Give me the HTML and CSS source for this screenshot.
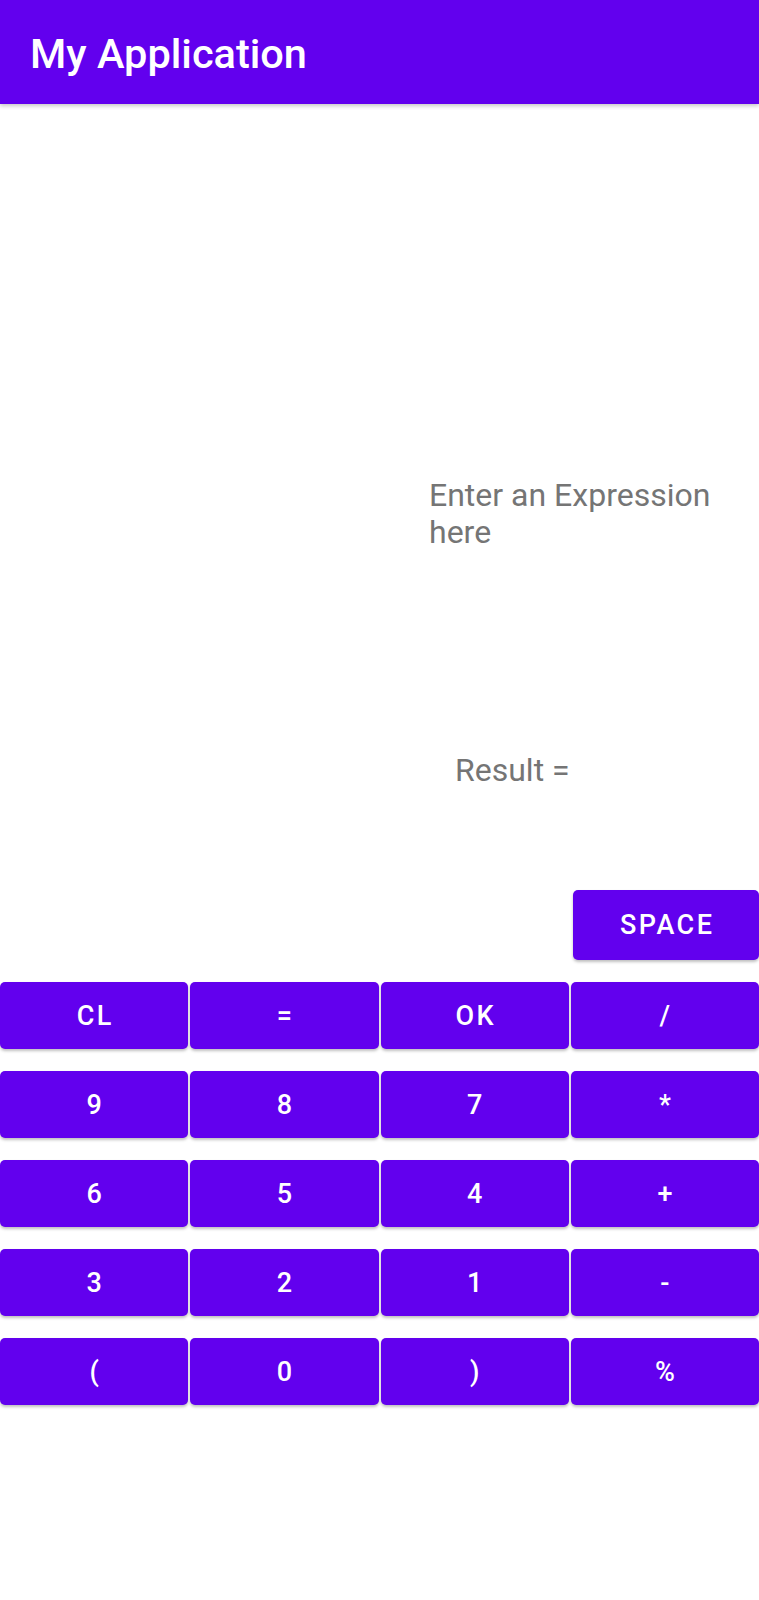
FILE: index.html
```html
<!DOCTYPE html>
<html>
<head>
<meta charset="utf-8">
<link rel="stylesheet" href="styles.css">
</head>
<body>
<header class="appbar">My Application</header>
<main class="content">
  <div class="expr">Enter an Expression<br>here</div>
  <div class="result">Result =</div>
  <div class="space-row"><button class="btn space">SPACE</button></div>
  <div class="keypad">
    <button class="btn">CL</button>
    <button class="btn">=</button>
    <button class="btn">OK</button>
    <button class="btn">/</button>
    <button class="btn">9</button>
    <button class="btn">8</button>
    <button class="btn">7</button>
    <button class="btn">*</button>
    <button class="btn">6</button>
    <button class="btn">5</button>
    <button class="btn">4</button>
    <button class="btn">+</button>
    <button class="btn">3</button>
    <button class="btn">2</button>
    <button class="btn">1</button>
    <button class="btn">-</button>
    <button class="btn">(</button>
    <button class="btn">0</button>
    <button class="btn">)</button>
    <button class="btn">%</button>
  </div>
</main>
</body>
</html>
```
FILE: styles.css
```css
html, body {
  margin: 0;
  padding: 0;
  background: #ffffff;
}
body {
  width: 759px;
  height: 1600px;
  font-family: Roboto, "Liberation Sans", sans-serif;
  overflow: hidden;
}
.appbar {
  box-sizing: border-box;
  height: 104px;
  background: #6200ee;
  color: #ffffff;
  font-size: 41.5px;
  font-weight: 500;
  line-height: 48px;
  padding: 30px 0 0 30px;
  box-shadow: 0 2px 4px rgba(0, 0, 0, 0.22);
  position: relative;
  z-index: 1;
}
.content {
  display: flex;
  flex-direction: column;
}
.expr {
  margin-top: 373px;
  padding-left: 429px;
  font-size: 32px;
  line-height: 37px;
  color: #757575;
  height: 74px;
}
.result {
  margin-top: 201px;
  padding-left: 455px;
  font-size: 32px;
  line-height: 37px;
  color: #757575;
}
.space-row {
  margin-top: 101px;
  display: flex;
  justify-content: flex-end;
}
.btn {
  border: none;
  margin: 0;
  padding: 0;
  background: #6200ee;
  color: #ffffff;
  font-family: Roboto, "Liberation Sans", sans-serif;
  font-size: 27px;
  font-weight: 500;
  letter-spacing: 0.09em;
  text-indent: 0.09em;
  border-radius: 5px;
  box-shadow: 0 2px 3px rgba(0, 0, 0, 0.25);
  display: flex;
  align-items: center;
  justify-content: center;
}
.space {
  width: 186px;
  height: 70px;
}
.keypad {
  margin-top: 22px;
  display: grid;
  grid-template-columns: repeat(4, 1fr);
  column-gap: 2px;
  row-gap: 22px;
}
.keypad .btn {
  height: 67px;
}
```
